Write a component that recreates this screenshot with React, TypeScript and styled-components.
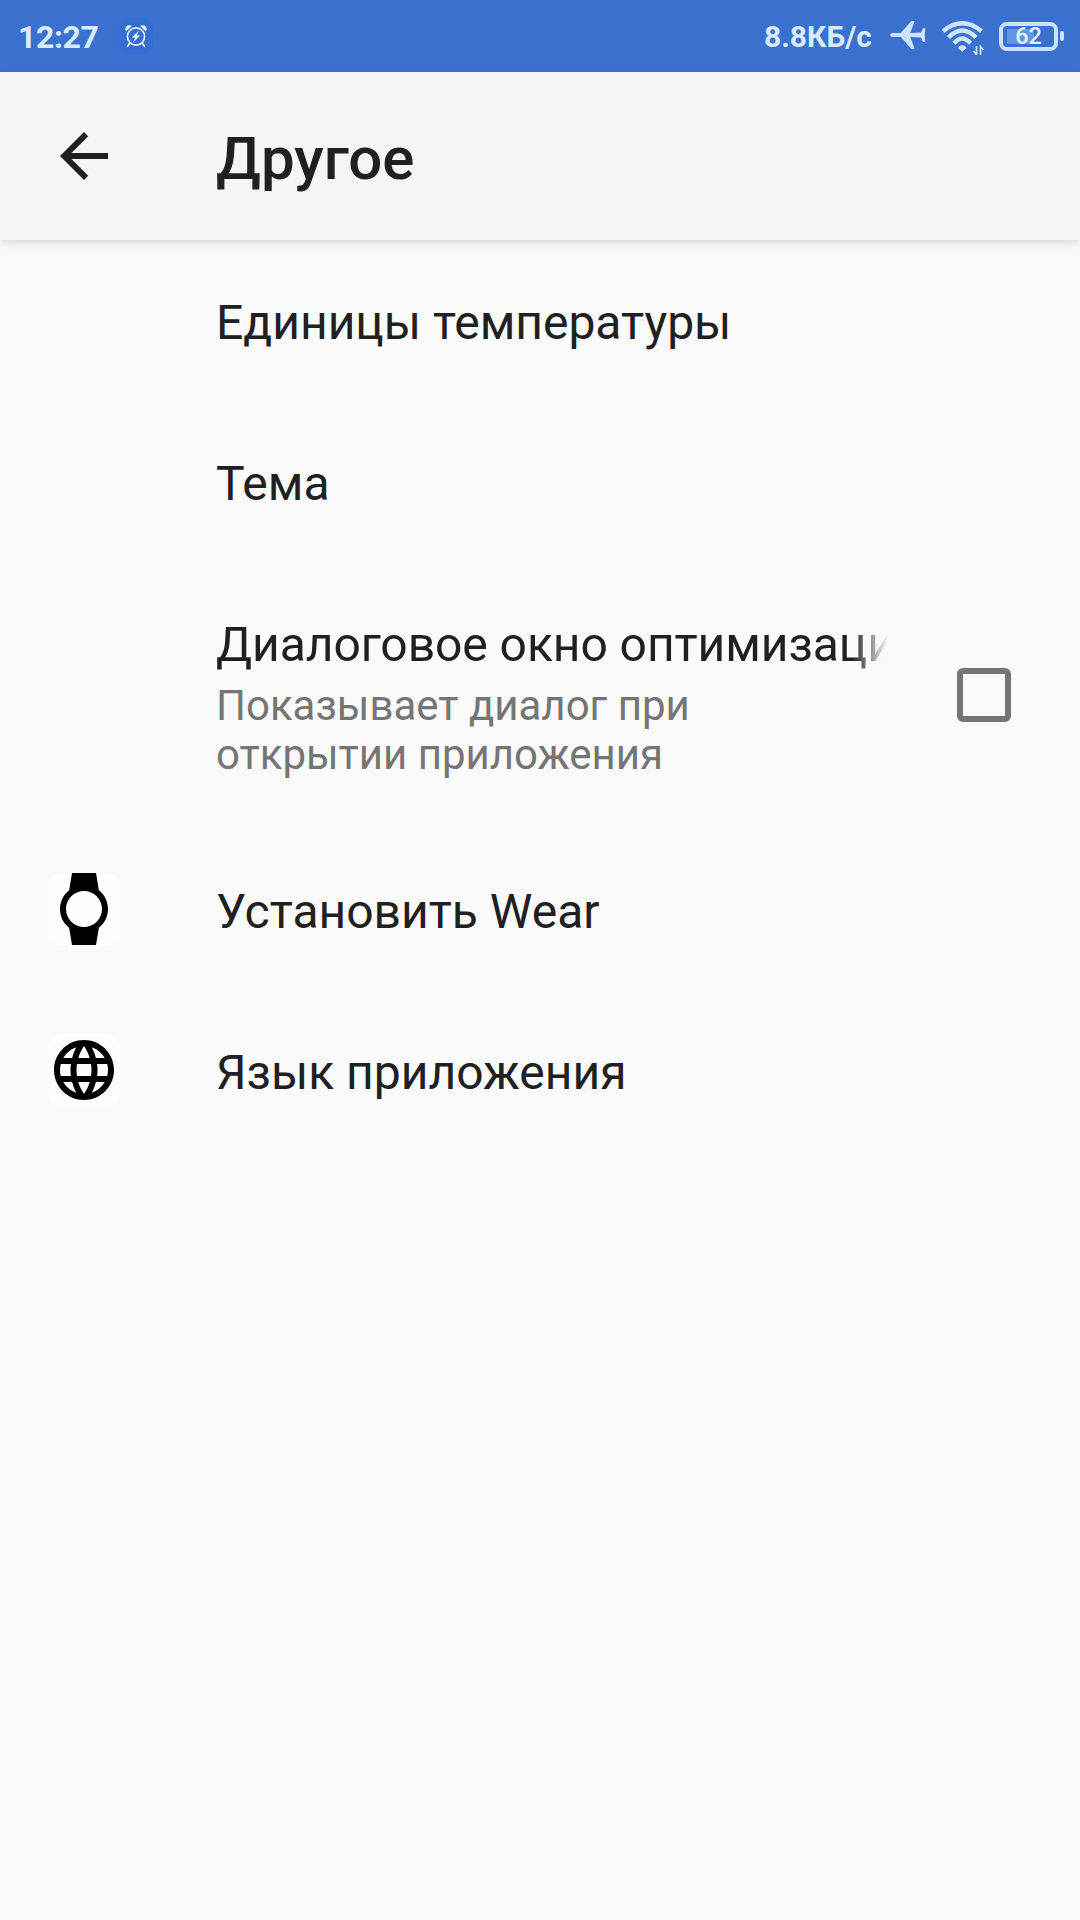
import React from "react";
import styled, { createGlobalStyle } from "styled-components";

const GlobalStyle = createGlobalStyle`
  *, *::before, *::after { box-sizing: border-box; }
  body { margin: 0; background: #fafafa; }
`;

const Screen = styled.main`
  display: flex;
  flex-direction: column;
  width: 1080px;
  height: 1920px;
  overflow: hidden;
  background: #fafafa;
  color: #202020;
  font-family: Roboto, "Noto Sans", sans-serif;
`;

const StatusBar = styled.div`
  display: flex;
  flex: none;
  justify-content: space-between;
  height: 72px;
  padding: 0 16px 0 18px;
  background: #3a70d0;
  color: #d9ebff;
`;

const StatusGroup = styled.div`
  display: flex;
  align-items: center;
`;

const Clock = styled.time`
  width: 100px;
  font-size: 32px;
  font-weight: 700;
  line-height: 38px;
  letter-spacing: -0.4px;
  padding-top: 1px;
`;

const AlarmBadge = styled.span`
  display: flex;
  align-items: center;
  justify-content: center;
  width: 35px;
  height: 36px;
  border-radius: 9px;
  background: #366dd1;
`;

const NetSpeed = styled.span`
  font-size: 30px;
  font-weight: 700;
  line-height: 36px;
  padding-top: 2px;
  margin-right: 18px;
`;

const WifiSlot = styled.span`
  display: flex;
  margin: 0 14px;
`;

const Battery = styled.div`
  display: flex;
  align-items: center;
  gap: 2px;
`;

const BatteryShell = styled.div`
  display: flex;
  align-items: center;
  justify-content: center;
  width: 59px;
  height: 29px;
  border: 4px solid #cde2fd;
  border-radius: 8px;
  background: linear-gradient(#6595e2, #6595e2) 4px 3px / 27px 15px no-repeat;
  color: #e2f0ff;
  font-size: 23.5px;
  font-weight: 500;
  line-height: 22px;
`;

const BatteryTip = styled.i`
  width: 4px;
  height: 10px;
  border-radius: 2px;
  background: #cde2fd;
`;

const AppBar = styled.header`
  display: flex;
  flex: none;
  align-items: center;
  height: 168px;
  padding-left: 48px;
  background: #f5f5f5;
  box-shadow: 0 2px 3px rgba(0, 0, 0, 0.05), 0 5px 10px rgba(0, 0, 0, 0.08);
`;

const BackButton = styled.button`
  display: flex;
  width: 168px;
  padding: 0;
  border: 0;
  background: none;
  color: #202020;
`;

const Title = styled.h1`
  margin: 0;
  font-size: 60px;
  font-weight: 500;
  line-height: 70px;
  padding-top: 6px;
`;

const List = styled.div`
  display: flex;
  flex-direction: column;
`;

const Row = styled.div`
  display: flex;
  align-items: center;
  padding: 48px;
`;

const IconSlot = styled.div`
  display: flex;
  flex: none;
  width: 168px;
  height: 65px;
  align-items: center;
  padding-bottom: 1px;
`;

const IconTile = styled.span`
  display: flex;
  width: 72px;
  height: 72px;
  border-radius: 12px;
  background: #fdfdfd;
  color: #000;
`;

const Labels = styled.div`
  flex: none;
  width: 672px;
`;

const Label = styled.div<{ $faded?: boolean }>`
  height: 65px;
  padding-top: 6px;
  overflow: hidden;
  white-space: nowrap;
  font-size: 48px;
  line-height: 57px;
  ${(p) => p.$faded && `
    letter-spacing: -0.06px;
    mask-image: linear-gradient(to right, #000 calc(100% - 36px), transparent);
  `}
`;

const Summary = styled.div`
  width: 500px;
  height: 106px;
  padding-top: 6px;
  color: #757575;
  font-size: 42px;
  line-height: 49px;
`;

const Checkbox = styled.span`
  width: 54px;
  height: 54px;
  margin: 0 0 2px 69px;
  border: 6px solid #757575;
  border-radius: 6px;
`;

const BACK = "M20 11H7.83l5.59-5.59L12 4l-8 8 8 8 1.41-1.41L7.83 13H20v-2z";
const WATCH =
  "M20 12c0-2.54-1.19-4.81-3.04-6.27L16 0H8l-.95 5.73C5.19 7.19 4 9.45 4 12s1.19 4.81 3.05 6.27L8 24h8l.96-5.73C18.81 16.81 20 14.54 20 12zM6 12c0-3.31 2.69-6 6-6s6 2.69 6 6-2.69 6-6 6-6-2.69-6-6z";
const GLOBE =
  "M11.99 2C6.47 2 2 6.48 2 12s4.47 10 9.99 10C17.52 22 22 17.52 22 12S17.52 2 11.99 2zm6.93 6h-2.95c-.32-1.25-.78-2.45-1.38-3.56 1.84.63 3.37 1.91 4.33 3.56zM12 4.04c.83 1.2 1.48 2.53 1.91 3.96h-3.82c.43-1.43 1.08-2.76 1.91-3.96zM4.26 14C4.1 13.36 4 12.69 4 12s.1-1.36.26-2h3.38c-.08.66-.14 1.32-.14 2s.06 1.34.14 2H4.26zm.82 2h2.95c.32 1.25.78 2.45 1.38 3.56-1.84-.63-3.37-1.9-4.33-3.56zm2.95-8H5.08c.96-1.66 2.49-2.93 4.33-3.56C8.81 5.55 8.35 6.75 8.03 8zM12 19.96c-.83-1.2-1.48-2.53-1.91-3.96h3.82c-.43 1.43-1.08 2.76-1.91 3.96zM14.34 14H9.66c-.09-.66-.16-1.32-.16-2s.07-1.35.16-2h4.68c.09.65.16 1.32.16 2s-.07 1.34-.16 2zm.25 5.56c.6-1.11 1.06-2.31 1.38-3.56h2.95c-.96 1.65-2.49 2.93-4.33 3.56zM16.36 14c.08-.66.14-1.32.14-2s-.06-1.34-.14-2h3.38c.16.64.26 1.31.26 2s-.1 1.36-.26 2h-3.38z";

const Glyph = ({ d }: { d: string }) => (
  <svg width="72" height="72" viewBox="0 0 24 24" fill="currentColor">
    <path d={d} />
  </svg>
);

const AlarmIcon = () => (
  <svg width="24" height="24" viewBox="0 0 24 24" fill="none" stroke="#e4f6ff" strokeWidth="1.6" strokeLinecap="round">
    <circle cx="12" cy="12.5" r="8.6" />
    <path d="M5.500 19.500l-2 2.800M18.500 19.500l2 2.800" />
    <path d="M2.400 6C1.200 3.800 3.800 1.200 6.400 2.300zM21.600 6C22.800 3.800 20.200 1.200 17.600 2.300z" fill="#e4f6ff" />
    <path d="M14.200 7.600l-5.700 5.600h3l-1.700 4.400 5.700-5.800h-3z" fill="#e4f6ff" stroke="#e4f6ff" strokeWidth=".6" />
  </svg>
);

const PlaneIcon = () => (
  <svg width="36" height="32" viewBox="0 0 36 32" fill="#cfe4ff">
    <path d="M2.300 12.900h8.400L21.200 1.300q1.700-1 3.400.2L20.200 12.900l10.800-.4 2-4.300h2.400L34.700 15l.7 6.900H33L31 17.500l-10.800-.4 4.400 11.400q-1.700 1.200-3.400.2L10.700 17.100H2.300a2.100 2.100 0 0 1 0-4.200z" />
  </svg>
);

const WifiIcon = () => (
  <svg width="45" height="37" viewBox="0 0 45 37" fill="none" stroke="#cfe4ff" strokeWidth="4.400">
    <path d="M3 13.200Q22.300-2.600 41.500 13.200" />
    <path d="M8.500 19.500Q22.300 5.500 36 19.500" />
    <path d="M14 25.300Q22.300 15.700 30.500 25.300" />
    <path d="M22.300 33.800l-4.200-3.500q1-3 4.200-3t4.200 3z" fill="#cfe4ff" stroke="none" />
    <path d="M36.500 28v8.500l-3-3.500M40.500 37v-8.500l3 3.500" strokeWidth="1.700" />
  </svg>
);

type Item = { label: string; summary?: string; icon?: string; faded?: boolean };

const items: Item[] = [
  { label: "Единицы температуры" },
  { label: "Тема" },
  { label: "Диалоговое окно оптимизации", summary: "Показывает диалог при открытии приложения", faded: true },
  { label: "Установить Wear", icon: WATCH },
  { label: "Язык приложения", icon: GLOBE },
];

export default function App() {
  return (
    <>
      <GlobalStyle />
      <Screen>
        <StatusBar>
          <StatusGroup>
            <Clock>12:27</Clock>
            <AlarmBadge>
              <AlarmIcon />
            </AlarmBadge>
          </StatusGroup>
          <StatusGroup>
            <NetSpeed>8.8КБ/с</NetSpeed>
            <PlaneIcon />
            <WifiSlot>
              <WifiIcon />
            </WifiSlot>
            <Battery>
              <BatteryShell>62</BatteryShell>
              <BatteryTip />
            </Battery>
          </StatusGroup>
        </StatusBar>
        <AppBar>
          <BackButton aria-label="Назад">
            <Glyph d={BACK} />
          </BackButton>
          <Title>Другое</Title>
        </AppBar>
        <List>
          {items.map((item) => (
            <Row key={item.label}>
              <IconSlot>
                {item.icon && (
                  <IconTile>
                    <Glyph d={item.icon} />
                  </IconTile>
                )}
              </IconSlot>
              <Labels>
                <Label $faded={item.faded}>{item.label}</Label>
                {item.summary && <Summary>{item.summary}</Summary>}
              </Labels>
              {item.summary && <Checkbox role="checkbox" aria-checked="false" />}
            </Row>
          ))}
        </List>
      </Screen>
    </>
  );
}
